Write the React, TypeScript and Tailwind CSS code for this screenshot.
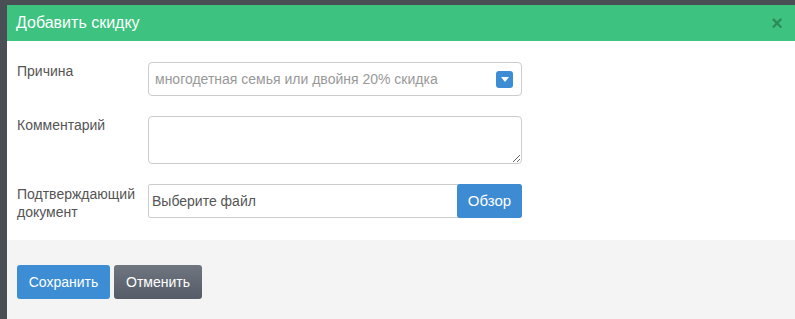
import React from "react";

export default function App() {
  const font = { fontFamily: '"Liberation Sans", Arial, sans-serif' };
  return (
    <div
      className="w-[795px] h-[319px] overflow-hidden bg-[#4a4e55] pl-[7px] pt-[5px] flex flex-col"
      style={font}
    >
      <div className="flex-1 flex flex-col bg-white">
        {/* Header */}
        <div className="h-[36px] bg-[#3ec27f] flex items-center justify-between pl-[9px] pr-[12px]">
          <span className="text-white text-[16px]">Добавить скидку</span>
          <span className="text-black/30 text-[20px] font-bold leading-none">×</span>
        </div>

        {/* Body */}
        <div className="flex flex-col gap-[20px] pt-[21px] pb-[22px] pl-[10px] text-[14px] text-[#555]">
          <div className="flex items-start">
            <div className="w-[131px] leading-[18px]">Причина</div>
            <div className="w-[374px] h-[34px] border border-[#ccc] rounded-[4px] flex items-center justify-between pl-[6px] pr-[8px]">
              <span className="text-[#999]">многодетная семья или двойня 20% скидка</span>
              <span className="w-[17px] h-[17px] rounded-[3px] bg-[#3c8dd4] flex items-center justify-center">
                <svg width="8" height="5" viewBox="0 0 8 5">
                  <path d="M0 0 L8 0 L4 5 Z" fill="#fff" />
                </svg>
              </span>
            </div>
          </div>

          <div className="flex items-start">
            <div className="w-[131px] leading-[18px]">Комментарий</div>
            <textarea className="block w-[374px] h-[48px] border border-[#ccc] rounded-[4px] outline-none" />
          </div>

          <div className="flex items-start h-[34px]">
            <div className="w-[131px] leading-[18px] pt-[1px]">
              Подтверждающий
              <br />
              документ
            </div>
            <div className="w-[374px] h-[34px] border border-[#ccc] rounded-[2px] flex items-stretch">
              <span className="flex-1 flex items-center pl-[3px] text-[#555]">Выберите файл</span>
              <span className="w-[65px] bg-[#3d8bd3] text-white text-[15px] flex items-center justify-center rounded-[3px] -my-px -mr-px">
                Обзор
              </span>
            </div>
          </div>
        </div>

        {/* Footer */}
        <div className="flex-1 bg-[#f4f4f4] pt-[25px] pl-[10px] flex items-start gap-[4px]">
          <button className="h-[34px] w-[93px] bg-[#3c8dd4] text-white text-[14px] rounded-[3px]">
            Сохранить
          </button>
          <button className="h-[34px] w-[88px] bg-gradient-to-b from-[#6f7680] to-[#555c67] text-white text-[14px] rounded-[3px]">
            Отменить
          </button>
        </div>
      </div>
    </div>
  );
}
